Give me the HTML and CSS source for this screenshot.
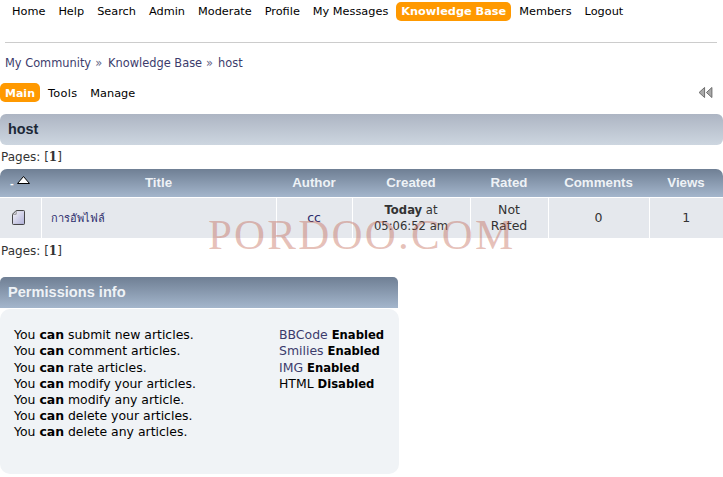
FILE: index.html
```html
<!DOCTYPE html>
<html lang="en">
<head>
<meta charset="utf-8">
<title>host - Knowledge Base</title>
<link rel="stylesheet" href="styles.css">
</head>
<body>
<nav class="topnav">
  <a href="#">Home</a><a href="#">Help</a><a href="#">Search</a><a href="#">Admin</a><a href="#">Moderate</a><a href="#">Profile</a><a href="#">My Messages</a><a href="#" class="active">Knowledge Base</a><a href="#">Members</a><a href="#">Logout</a>
</nav>
<hr class="rule">
<div class="crumbs"><a href="#">My Community</a><span class="sep">»</span><a href="#">Knowledge Base</a><span class="sep2">»</span><a href="#">host</a></div>
<div class="subbar">
  <nav class="subnav"><a href="#" class="active">Main</a><a href="#" class="tools">Tools</a><a href="#">Manage</a></nav>
  <svg class="collapse" width="15" height="11" viewBox="0 0 16 12"><path d="M7 .5V11.5L1 6Z" fill="#aaa" stroke="#666"/><path d="M15 .5V11.5L9 6Z" fill="#aaa" stroke="#666"/></svg>
</div>
<h1 class="titlebar">host</h1>
<div class="pages">Pages: [<b>1</b>]</div>
<table class="list">
  <colgroup><col class="c1"><col class="c2"><col class="c3"><col class="c4"><col class="c5"><col class="c6"><col class="c7"></colgroup>
  <thead>
    <tr>
      <th class="sort"><span class="dash">-</span><svg class="arrow" width="13" height="8" viewBox="0 0 13 8"><path d="M.5 7.5 6.5.5 12.5 7.5Z" fill="#fff" stroke="#000"/></svg></th>
      <th>Title</th><th>Author</th><th>Created</th><th>Rated</th><th>Comments</th><th>Views</th>
    </tr>
  </thead>
  <tbody>
    <tr>
      <td><svg class="doc" width="13" height="15" viewBox="0 0 14 16"><defs><linearGradient id="docfill" x1="0" y1="0" x2="1" y2="1"><stop offset="0" stop-color="#f6f6fa"/><stop offset="1" stop-color="#b0b0d8"/></linearGradient></defs><path d="M4.5.5H12.5Q13.5.5 13.5 1.5V14.5Q13.5 15.5 12.5 15.5H1.5Q.5 15.5 .5 14.5V4.5Z" fill="url(#docfill)" stroke="#333"/><path d="M4.5.5V4.5H.5" fill="none" stroke="#888"/></svg></td>
      <td class="name"><a href="#">การอัพไฟล์</a></td>
      <td class="author"><a href="#">cc</a></td>
      <td class="created"><b>Today</b> at<br>05:06:52 am</td>
      <td class="rated">Not Rated</td>
      <td class="num">0</td>
      <td class="num"><a href="#">1</a></td>
    </tr>
  </tbody>
</table>
<div class="pages after">Pages: [<b>1</b>]</div>
<section class="perm">
  <h2 class="permhead">Permissions info</h2>
  <div class="permbody">
    <ul class="rights">
      <li>You <b>can</b> submit new articles.</li>
      <li>You <b>can</b> comment articles.</li>
      <li>You <b>can</b> rate articles.</li>
      <li>You <b>can</b> modify your articles.</li>
      <li>You <b>can</b> modify any article.</li>
      <li>You <b>can</b> delete your articles.</li>
      <li>You <b>can</b> delete any articles.</li>
    </ul>
    <ul class="codes">
      <li><a href="#">BBCode</a> <b>Enabled</b></li>
      <li><a href="#">Smilies</a> <b>Enabled</b></li>
      <li><a href="#">IMG</a> <b>Enabled</b></li>
      <li>HTML <b>Disabled</b></li>
    </ul>
  </div>
</section>
<div class="watermark">PORDOO.COM</div>
</body>
</html>
```
FILE: styles.css
```css
* { box-sizing: border-box; }
html, body { margin: 0; padding: 0; }
body {
  position: relative;
  height: 477px;
  overflow: hidden;
  background: #fff;
  color: #1c2837;
  font: 11.5px/16px "DejaVu Sans", Verdana, sans-serif;
}
a { color: inherit; text-decoration: none; }
.topnav { display: flex; height: 22px; padding: 2px 0 0 5.5px; color: #000; font-size: 11.3px; }
.topnav a { height: 19px; padding: 2px 6.5px 0; line-height: 16px; }
.topnav a.active {
  padding: 2px 5px 0;
  margin: 0 1.5px;
  font-size: 11.3px;
}
.topnav a.active, .subnav a.active {
  background: #f90;
  color: #fff;
  font-weight: bold;
  border-radius: 5px;
}
.rule { height: 1px; margin: 20px 6px 0 5px; border: 0; background: #ccc; }
.crumbs { padding: 12px 0 0 5px; height: 35px; color: #3c3c6c; font-size: 11.4px; }
.crumbs .sep { margin: 0 6px 0 4px; color: #668; }
.crumbs .sep2 { margin: 0 5px 0 4px; color: #668; }
.subbar { display: flex; justify-content: space-between; align-items: center; height: 19px; margin-top: 5px; }
.subnav { display: flex; color: #000; font-size: 11.3px; }
.subnav a { height: 19px; padding: 3px 5px 0; margin-right: 3px; }
.subnav a.active { font-size: 11px; }
.subnav a.tools { letter-spacing: 0.3px; }
.collapse { margin-right: 10px; }
.titlebar {
  margin: 12px 0 0;
  height: 31px;
  padding: 0 8px;
  font: bold 14.4px/30px "Liberation Sans", Arial, sans-serif;
  color: #1c2837;
  background: linear-gradient(#adb5c3, #cdd6e0);
  border-radius: 6px;
}
.pages { height: 24px; padding: 4px 0 0 1px; color: #333; font-size: 12px; }
.pages b { font-family: "DejaVu Serif", serif; }
.list { width: 723px; table-layout: fixed; border-collapse: collapse; }
.c1 { width: 41px; } .c2 { width: 235px; } .c3 { width: 76px; } .c4 { width: 118px; }
.c5 { width: 78px; } .c6 { width: 101px; } .c7 { width: 74px; }
.list th {
  height: 28px;
  padding: 1px 0 0;
  color: #eef2f6;
  font: bold 13.3px/16px "Liberation Sans", Arial, sans-serif;
  background: linear-gradient(#6f7f94, #a4b6cc);
}
.list thead th:first-child { border-top-left-radius: 7px; }
.list thead th:last-child { border-top-right-radius: 7px; }
.list th.sort { text-align: left; padding: 0 0 0 10px; white-space: nowrap; }
.dash { color: #fff; font-size: 11px; margin-right: 3px; }
.arrow { vertical-align: 3px; }
.list td {
  height: 41px;
  padding: 0;
  text-align: center;
  background: #e5e8ed;
  border-left: 1px solid #fff;
  border-top: 1px solid #fff;
  color: #333;
}
.list td:first-child { border-left: 0; }
.list td.name { text-align: left; padding-left: 9px; color: #2c2c6c; font-family: "Noto Sans", "DejaVu Sans", sans-serif; font-size: 11px; }
.list td.author { color: #2c2c6c; font-size: 12.5px; }
.list td.created { font-size: 11.6px; }
.list td.rated { padding: 0 12px; font-size: 12.5px; }
.list td.num { font-size: 12.5px; }
.doc { display: block; margin: 0 auto 0 12px; }
.pages.after { height: 39px; padding-top: 5px; }
.perm { width: 399px; }
.permhead {
  margin: 0;
  width: 398px;
  height: 31px;
  padding: 0 8px;
  color: #eef2f6;
  font: bold 14.6px/30px "Liberation Sans", Arial, sans-serif;
  background: linear-gradient(#6f7f94, #a4b6cc);
  border-radius: 5px 5px 0 0;
}
.permbody {
  display: flex;
  justify-content: space-between;
  height: 165px;
  margin-top: 1px;
  padding: 18.1px 15px 0 14px;
  color: #000;
  background: #f0f3f6;
  border-radius: 10px;
  font-size: 12.45px;
  line-height: 16.2px;
}
.rights, .codes { margin: 0; padding: 0; list-style: none; }
.codes { width: 105px; white-space: nowrap; }
.codes a { color: #3c3c6c; }
.codes b { font-size: 11.6px; }
.watermark {
  position: absolute;
  left: 208px;
  top: 209px;
  color: rgba(190, 90, 70, 0.38);
  font: 43px/52px "Liberation Serif", "Times New Roman", serif;
  letter-spacing: 2.2px;
  pointer-events: none;
}
```
